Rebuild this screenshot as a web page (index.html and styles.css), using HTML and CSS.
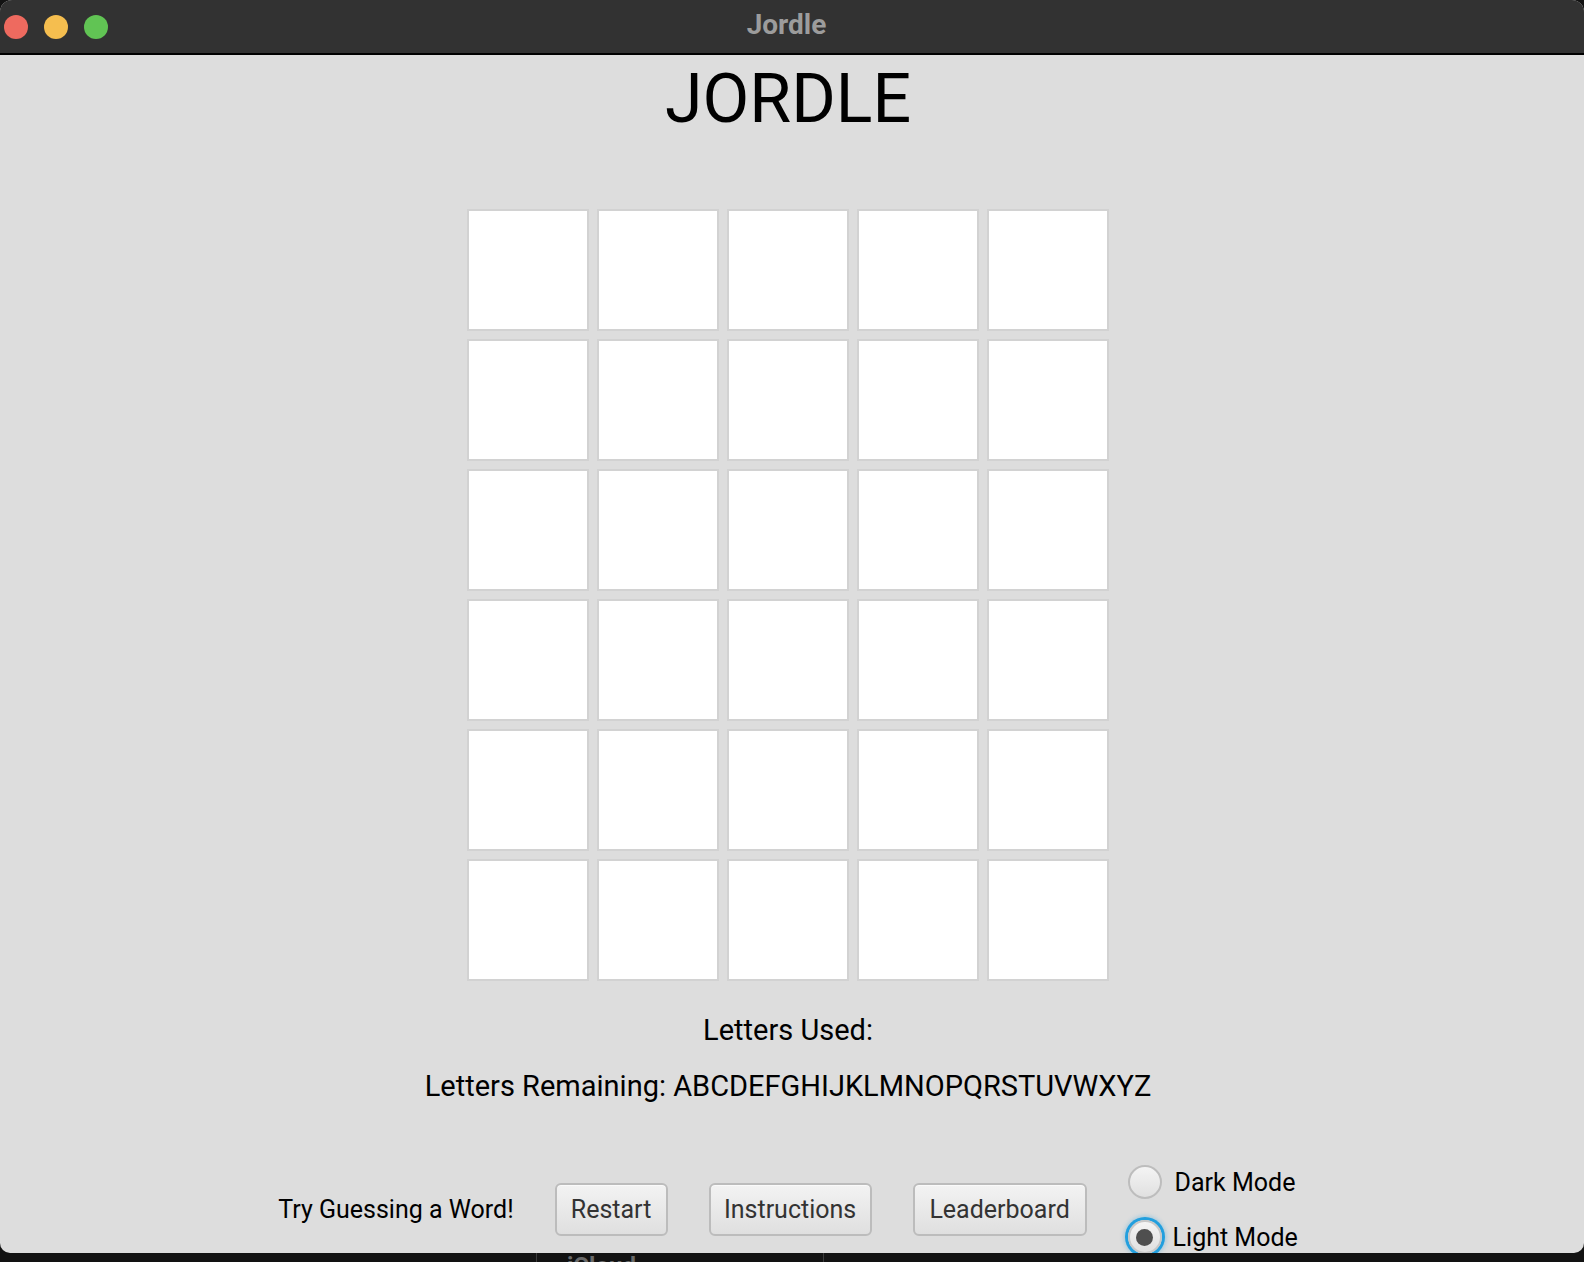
FILE: index.html
```html
<!DOCTYPE html>
<html>
<head>
<meta charset="utf-8">
<title>Jordle</title>
<link rel="stylesheet" href="styles.css">
</head>
<body>
<div class="window">
  <div class="titlebar">
    <div class="lights">
      <span class="light red"></span>
      <span class="light yellow"></span>
      <span class="light green"></span>
    </div>
    <div class="wintitle">Jordle</div>
  </div>
  <div class="content">
    <h1 class="logo">JORDLE</h1>
    <div class="board">
      <div class="tile"></div><div class="tile"></div><div class="tile"></div><div class="tile"></div><div class="tile"></div>
      <div class="tile"></div><div class="tile"></div><div class="tile"></div><div class="tile"></div><div class="tile"></div>
      <div class="tile"></div><div class="tile"></div><div class="tile"></div><div class="tile"></div><div class="tile"></div>
      <div class="tile"></div><div class="tile"></div><div class="tile"></div><div class="tile"></div><div class="tile"></div>
      <div class="tile"></div><div class="tile"></div><div class="tile"></div><div class="tile"></div><div class="tile"></div>
      <div class="tile"></div><div class="tile"></div><div class="tile"></div><div class="tile"></div><div class="tile"></div>
    </div>
    <p class="info used">Letters Used:</p>
    <p class="info remaining">Letters Remaining: ABCDEFGHIJKLMNOPQRSTUVWXYZ</p>
    <div class="controls">
      <span class="hint">Try Guessing a Word!</span>
      <button class="btn btn-restart">Restart</button>
      <button class="btn btn-instr">Instructions</button>
      <button class="btn btn-leader">Leaderboard</button>
      <div class="modes">
        <div class="radio"><span class="circle"></span><span class="rlabel">Dark Mode</span></div>
        <div class="radio selected"><span class="circle"><span class="dot"></span></span><span class="rlabel">Light Mode</span></div>
      </div>
    </div>
  </div>
</div>
<div class="desk">
  <div class="desk-seg"><span class="desk-text">iCloud</span></div>
</div>
</body>
</html>
```

FILE: styles.css
```css
html, body {
  margin: 0;
  padding: 0;
}
body {
  width: 1584px;
  height: 1262px;
  overflow: hidden;
  background: #121212;
  font-family: Roboto, "Liberation Sans", sans-serif;
}
.window {
  height: 1253px;
  display: flex;
  flex-direction: column;
  border-radius: 12px 12px 10px 10px;
  overflow: hidden;
  background: #dddddd;
}
.titlebar {
  height: 53px;
  flex: none;
  background: #323232;
  border-bottom: 2px solid #000;
  display: flex;
  align-items: center;
  position: relative;
}
.lights {
  display: flex;
  gap: 16px;
  padding-left: 4px;
  padding-top: 1px;
}
.light {
  width: 24px;
  height: 24px;
  border-radius: 50%;
  display: block;
}
.red { background: #ee6a5f; }
.yellow { background: #f5be4f; }
.green { background: #61c454; }
.wintitle {
  position: absolute;
  left: 0;
  right: 11px;
  top: 0;
  height: 53px;
  line-height: 50px;
  text-align: center;
  color: #9c9c9c;
  font-weight: 700;
  font-size: 28px;
}
.content {
  flex: 1;
  display: flex;
  flex-direction: column;
  align-items: center;
  padding-right: 8px;
  overflow: hidden;
}
.logo {
  margin: 4px 0 0;
  font-size: 68px;
  line-height: 80px;
  font-weight: 400;
  color: #000;
}
.board {
  margin-top: 70px;
  display: grid;
  grid-template-columns: repeat(5, 122px);
  grid-auto-rows: 122px;
  gap: 8px;
}
.tile {
  box-sizing: border-box;
  background: #fff;
  border: 2px solid #d2d2d2;
}
.info {
  margin: 0;
  font-size: 29px;
  line-height: 34px;
  color: #000;
}
.used { margin-top: 32px; }
.remaining { margin-top: 22px; }
.controls {
  margin-top: 61px;
  display: flex;
  align-items: center;
  gap: 41px;
  flex: none;
}
.hint {
  font-size: 25px;
  color: #000;
}
.btn {
  box-sizing: border-box;
  height: 53px;
  border: 2px solid #bcbcbc;
  border-radius: 6px;
  background: linear-gradient(#f3f3f3, #dfdfdf);
  box-shadow: inset 0 1px 0 #fafafa;
  font-family: Roboto, "Liberation Sans", sans-serif;
  font-size: 25px;
  color: #333;
  padding: 0;
}
.btn-restart { width: 113px; }
.btn-instr { width: 163px; }
.btn-leader { width: 174px; }
.modes {
  display: flex;
  flex-direction: column;
  gap: 19px;
}
.radio {
  height: 36px;
  display: flex;
  align-items: center;
  gap: 13px;
}
.circle {
  box-sizing: border-box;
  width: 34px;
  height: 34px;
  border-radius: 50%;
  border: 2px solid #bdbdbd;
  background: linear-gradient(#f4f4f4, #e0e0e0);
  display: flex;
  align-items: center;
  justify-content: center;
}
.selected .circle {
  border-color: #c8c8c8;
  box-shadow: 0 0 0 3px #229fde, 0 0 4px 4px rgba(34, 159, 222, 0.35);
}
.dot {
  width: 17px;
  height: 17px;
  border-radius: 50%;
  background: #4f4f4f;
}
.rlabel {
  font-size: 25px;
  color: #000;
}
.selected .rlabel {
  margin-left: -2px;
}
.desk {
  height: 9px;
  overflow: hidden;
  display: flex;
}
.desk-seg {
  margin-left: 536px;
  width: 286px;
  border-left: 1px solid #3a3a3a;
  border-right: 1px solid #3a3a3a;
  height: 9px;
  overflow: hidden;
}
.desk-text {
  display: block;
  padding-left: 30px;
  margin-top: 1px;
  font-size: 24px;
  line-height: 24px;
  font-weight: 700;
  color: #6a6a6a;
}
```
